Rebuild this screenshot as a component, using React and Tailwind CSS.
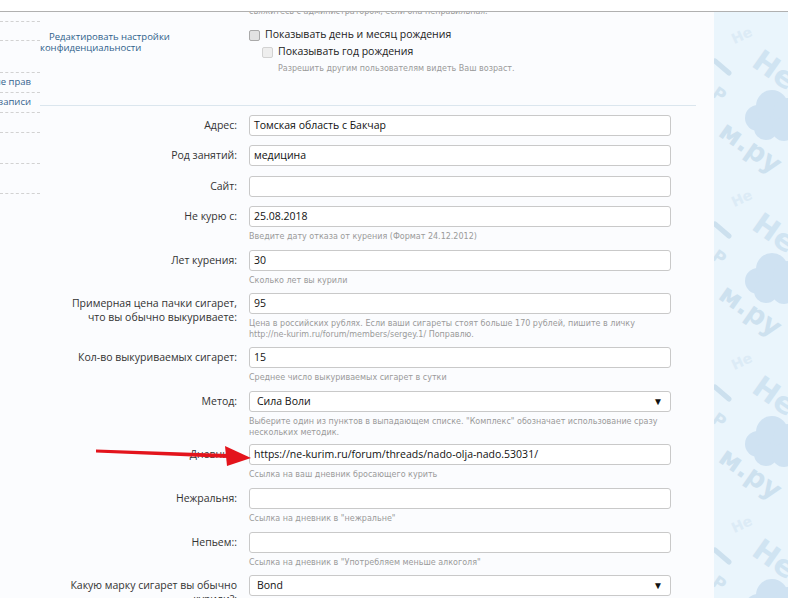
import React from 'react';

const sans = { fontFamily: '"Open Sans", "Noto Sans", sans-serif' };
const small = { fontFamily: '"DejaVu Sans", Verdana, sans-serif' };

const rows = [
  { label: 'Адрес:', value: 'Томская область с Бакчар', gap: 'pb-[9px]' },
  { label: 'Род занятий:', value: 'медицина', gap: 'pb-[10px]' },
  { label: 'Сайт:', value: '', gap: 'pb-[9px]' },
  { label: 'Не курю с:', value: '25.08.2018', hint: 'Введите дату отказа от курения (Формат 24.12.2012)', gap: 'pb-[8px]' },
  { label: 'Лет курения:', value: '30', hint: 'Сколько лет вы курили', gap: 'pb-[7px]' },
  {
    label: 'Примерная цена пачки сигарет, что вы обычно выкуриваете:',
    value: '95',
    hint: 'Цена в российских рублях. Если ваши сигареты стоят больше 170 рублей, пишите в личку http://ne-kurim.ru/forum/members/sergey.1/ Поправлю.',
    gap: 'pb-[7px]',
  },
  { label: 'Кол-во выкуриваемых сигарет:', value: '15', hint: 'Среднее число выкуриваемых сигарет в сутки', gap: 'pb-[8px]' },
  {
    label: 'Метод:',
    value: 'Сила Воли',
    select: true,
    hint: 'Выберите один из пунктов в выпадающем списке. "Комплекс" обозначает использование сразу нескольких методик.',
    gap: 'pb-[6px]',
  },
  { label: 'Дневник:', value: 'https://ne-kurim.ru/forum/threads/nado-olja-nado.53031/', hint: 'Ссылка на ваш дневник бросающего курить', gap: 'pb-[8px]' },
  { label: 'Нежральня:', value: '', hint: 'Ссылка на дневник в "нежральне"', gap: 'pb-[8px]' },
  { label: 'Непьем::', value: '', hint: 'Ссылка на дневник в "Употребляем меньше алкоголя"', gap: 'pb-[7px]' },
  { label: 'Какую марку сигарет вы обычно курили?:', value: 'Bond', select: true, gap: 'pb-[9px]' },
];

const side = [
  { h: 'h-[10px]', text: '' },
  { h: 'h-[19px]', text: '' },
  { h: 'h-[32px]', text: '' },
  { h: 'h-[20px]', text: 'Изменение прав' },
  { h: 'h-[20px]', text: 'Удаление записи' },
  { h: 'h-[20px]', text: '' },
  { h: 'h-[31px]', text: '' },
  { h: 'h-[30px]', text: '' },
];

function Checkbox({ faint }) {
  return (
    <span
      className={`inline-block w-[11px] h-[11px] rounded-[2px] border ${
        faint ? 'border-[#d2d2d2] bg-[#eeeeee]' : 'border-[#a9a9a9] bg-[#e2e2e2]'
      }`}
    />
  );
}

function Watermark() {
  const tiles = [-163, 0, 163, 326, 489];
  const wm = { fontFamily: '"DejaVu Sans", sans-serif' };
  return (
    <svg width="74" height="586" className="block">
      {tiles.map((t) => (
        <g key={t} transform={`translate(0 ${t})`}>
          <text x="18" y="30" fontSize="14" fontWeight="700" fill="#dcebf6" transform="rotate(-25 24 26)" style={wm}>
            Не
          </text>
          <text x="36" y="66" fontSize="30" fontWeight="700" fill="#d0e4f2" transform="rotate(35 56 60)" style={wm}>
            Не
          </text>
          <line x1="1" y1="49" x2="15" y2="61" stroke="#cce0ee" strokeWidth="5" strokeLinecap="round" />
          <text x="-1" y="88" fontSize="17" fontWeight="700" fill="#d0e3f0" transform="rotate(35 5 82)" style={wm}>
            Р
          </text>
          <g fill="#cfe2f2">
            <circle cx="44" cy="106" r="13" />
            <circle cx="58" cy="94" r="16" />
            <circle cx="74" cy="101" r="15" />
            <circle cx="52" cy="116" r="12" />
            <circle cx="70" cy="117" r="12" />
          </g>
          <text x="2" y="134" fontSize="27" fontWeight="700" fill="#cde1ef" transform="rotate(35 20 130)" style={wm}>
            м.ру
          </text>
        </g>
      ))}
    </svg>
  );
}

export default function App() {
  return (
    <div className="relative w-[788px] h-[598px] overflow-hidden flex flex-col bg-white">
      {/* верхняя полоса */}
      <div className="h-[12px] shrink-0 bg-white border-b border-[#b0b0b0] relative z-10" />

      <div className="flex flex-1 min-h-0">
        <div className="w-[714px] flex bg-[#fbfcfe] overflow-hidden">
          {/* боковое меню */}
          <div className="w-[40px] shrink-0 flex flex-col">
            {side.map((s, i) => (
              <div
                key={i}
                className={`${s.h} flex items-center justify-end pr-[9px] overflow-hidden border-b border-dashed border-[#d2d2d2] text-[9.5px] text-[#36648e] whitespace-nowrap`}
                style={sans}
              >
                {s.text}
              </div>
            ))}
          </div>

          {/* содержимое */}
          <div className="flex-1 flex flex-col">
            <div className="h-[94px] shrink-0 flex border-b border-[#dbe6ee] mr-[18px]">
              <div className="w-[197px] shrink-0 pt-[19px]">
                <div className="text-[9.5px] leading-[11px] text-[#2f5f8b] indent-[9px] w-[150px]" style={sans}>
                  Редактировать настройки конфиденциальности
                </div>
              </div>
              <div className="ml-[12px] flex flex-col">
                <div className="-mt-[6px] text-[8px] leading-[11px] text-[#9a9a9a] whitespace-nowrap" style={small}>
                  свяжитесь с администратором, если она неправильная.
                </div>
                <div className="mt-[11px] h-[14px] flex items-center gap-[5px] text-[10.5px] text-[#222]" style={sans}>
                  <Checkbox />
                  <span>Показывать день и месяц рождения</span>
                </div>
                <div className="mt-[3px] h-[14px] pl-[13px] flex items-center gap-[5px] text-[10.5px] text-[#222]" style={sans}>
                  <Checkbox faint />
                  <span>Показывать год рождения</span>
                </div>
                <div className="mt-[4px] pl-[29px] text-[8px] leading-[11px] text-[#9a9a9a]" style={small}>
                  Разрешить другим пользователям видеть Ваш возраст.
                </div>
              </div>
            </div>

            <div className="pt-[9px] flex flex-col">
              {rows.map((r) => (
                <div key={r.label} className={`flex ${r.gap}`}>
                  <div
                    className="w-[197px] shrink-0 pt-[3px] pl-[20px] text-right text-[10.5px] leading-[14px] text-[#333]"
                    style={sans}
                  >
                    {r.label}
                  </div>
                  <div className="ml-[12px] w-[422px] flex flex-col">
                    <div
                      className="h-[21px] flex items-center justify-between px-[4px] bg-white border border-[#c9c9c9] rounded-[3px] text-[10.5px] text-[#111] whitespace-nowrap"
                      style={sans}
                    >
                      <span className={r.select ? 'pl-[3px]' : ''}>{r.value}</span>
                      {r.select && <span className="text-[10px] text-[#111] pr-[3px]">▼</span>}
                    </div>
                    {r.hint && (
                      <div className="mt-[4px] text-[8px] leading-[11px] text-[#9a9a9a] pr-[6px]" style={small}>
                        {r.hint}
                      </div>
                    )}
                  </div>
                </div>
              ))}
            </div>
          </div>
        </div>

        {/* фон с водяным знаком */}
        <div className="flex-1 bg-[#eaf5fc] overflow-hidden">
          <Watermark />
        </div>
      </div>

      {/* красная стрелка */}
      <svg className="absolute left-0 top-0 pointer-events-none" width="788" height="598">
        <path d="M96 449.5 L228 454 L228 458 L96 452.5 Z" fill="#e3141c" />
        <path d="M225 446 L251 458 L227 466 Z" fill="#e3141c" />
      </svg>
    </div>
  );
}
